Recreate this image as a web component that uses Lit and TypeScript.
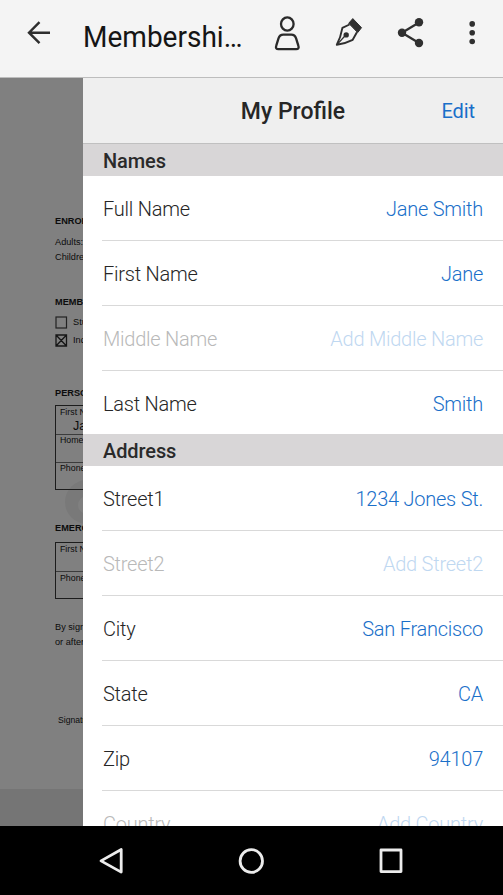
import { LitElement, html, css, svg } from "lit";
import { customElement, property } from "lit/decorators.js";

@customElement("form-page")
class FormPage extends LitElement {
  static styles = css`
    :host { display: block; position: relative; width: 83px; height: 100%; overflow: hidden; background: #808080; color: #0c0c0c; font-family: "Liberation Sans", Arial, sans-serif; font-size: 9.2px; white-space: nowrap; }
    .sheet { box-sizing: border-box; position: relative; height: 711px; padding: 136px 0 0 55px; display: flex; flex-direction: column; }
    .desk { height: 37px; background: #757575; }
    .line { line-height: 15px; height: 15px; flex: none; }
    .tight { height: 14px; line-height: 14px; }
    .head { font-weight: bold; line-height: 14px; height: 14px; flex: none; }
    .check { display: flex; align-items: center; gap: 5px; height: 18px; flex: none; }
    .check svg { width: 13px; height: 13px; flex: none; }
    .group { display: flex; flex-direction: column; margin-top: 4px; }
    .table { display: flex; flex-direction: column; border: 1px solid #1c1c1c; width: 120px; box-sizing: border-box; flex: none; }
    .cell { box-sizing: border-box; padding: 0 0 0 4px; line-height: 10px; font-size: 8.8px; border-top: 1px solid #3c3c3c; }
    .cell:first-child { border-top: 0; padding-top: 1px; }
    .low .cell { padding-top: 1px; }
    .c28 { height: 28px; }
    .c27 { height: 27px; }
    .entry { font-size: 12.5px; line-height: 14px; padding: 2px 0 0 13px; }
    .a { margin-top: 7px; }
    .b { margin-top: 30px; }
    .c { margin-top: 37px; }
    .d { margin-top: 5px; }
    .e { margin-top: 31px; }
    .f { margin-top: 7px; }
    .g { margin-top: 21px; }
    .h { margin: 64px 0 0 3px; font-size: 8.6px; }
    .mark { position: absolute; left: 65px; top: 402px; width: 44px; height: 44px; border-radius: 50%; background: #797979; }
    .mark::after { content: ""; position: absolute; left: 13px; top: 16px; width: 18px; height: 18px; border-radius: 50%; background: #808080; }
  `;
  render() {
    return html`
      <div class="mark"></div>
      <div class="sheet">
        <div class="head">ENROLLMENT</div>
        <div class="line a">Adults:</div>
        <div class="line">Children:</div>
        <div class="head b">MEMBERSHIP</div>
        <div class="group">
          <div class="check"><svg viewBox="0 0 13 13"><rect x="1" y="1" width="10.5" height="11" fill="none" stroke="#222" stroke-width="1.2" /></svg>Student</div>
          <div class="check"><svg viewBox="0 0 13 13"><path d="M1 1h10.5v11H1zM1 1l10.5 11M11.5 1L1 12" fill="none" stroke="#161616" stroke-width="1.3" /></svg>Individual</div>
        </div>
        <div class="head c">PERSONAL</div>
        <div class="table d">
          <div class="cell c28">First Name<div class="entry">Jane</div></div>
          <div class="cell c28">Home Address</div>
          <div class="cell c27">Phone</div>
        </div>
        <div class="head e">EMERGENCY</div>
        <div class="table low f">
          <div class="cell c28">First Name</div>
          <div class="cell c27">Phone</div>
        </div>
        <div class="line g">By signing</div>
        <div class="line tight">or after</div>
        <div class="line h">Signature</div>
      </div>
      <div class="desk"></div>
    `;
  }
}

@customElement("profile-row")
class ProfileRow extends LitElement {
  @property() label = "";
  @property() value = "";
  @property({ type: Boolean, reflect: true }) empty = false;
  static styles = css`
    :host { display: flex; justify-content: space-between; align-items: center; box-sizing: border-box; flex: none; height: 65px; margin-left: 19px; padding: 2px 20px 0 1px; border-bottom: 1px solid #d9d9d9; font-size: 20px; font-weight: 300; letter-spacing: -0.24px; color: #262626; white-space: nowrap; }
    .value { color: #1a6fc9; }
    :host([empty]) { color: #b9b9b9; }
    :host([empty]) .value { color: #bfd8f1; }
  `;
  render() {
    return html`<span>${this.label}</span><span class="value">${this.value}</span>`;
  }
}

type Field = [label: string, value: string, empty?: boolean];
const SECTIONS: { title: string; fields: Field[] }[] = [
  {
    title: "Names",
    fields: [
      ["Full Name", "Jane Smith"],
      ["First Name", "Jane"],
      ["Middle Name", "Add Middle Name", true],
      ["Last Name", "Smith"],
    ],
  },
  {
    title: "Address",
    fields: [
      ["Street1", "1234 Jones St."],
      ["Street2", "Add Street2", true],
      ["City", "San Francisco"],
      ["State", "CA"],
      ["Zip", "94107"],
      ["Country", "Add Country", true],
    ],
  },
];

const glyphs = {
  back: svg`<path d="M50 32.7H29M39.5 22.2L29 32.7l10.5 10.5" fill="none" stroke="#2e2e2e" stroke-width="2.4" />`,
  person: svg`<g fill="none" stroke="#2a2a2a" stroke-width="2.3"><ellipse cx="287.3" cy="24" rx="6.3" ry="6.6" /><path d="M283.3 34.6h8c2.6 0 4 1.3 4.8 3.7l2.3 7.6c.7 2.1-.2 3.3-2.2 3.3h-17.8c-2 0-2.9-1.2-2.2-3.3l2.3-7.6c.8-2.4 2.2-3.7 4.8-3.7z" /></g>`,
  pen: svg`<path d="M352.8 18.6l8.7 9.1-3.8 4.9-9-9.3z" fill="#2f2f2f" stroke="#2f2f2f" stroke-linejoin="round" /><path d="M349.5 24.5l-7.1 3.4c-1 5.6-2.8 11.6-5.6 16.9 5.8-.9 10.8-2.4 15.9-5l4.2-7.6" fill="none" stroke="#2f2f2f" stroke-width="1.9" stroke-linejoin="round" /><path d="M337 44.6l9-9.8" stroke="#2f2f2f" stroke-width="1.3" /><circle cx="346.2" cy="34.9" r="2.7" fill="#2f2f2f" />`,
  share: svg`<path d="M419 22.4L402 32.7l17 10.3" fill="none" stroke="#303030" stroke-width="2.3" /><g fill="#303030"><circle cx="419" cy="22.3" r="4.2" /><circle cx="402" cy="32.7" r="4.2" /><circle cx="419" cy="43" r="4.2" /></g>`,
  more: svg`<g fill="#303030"><circle cx="472.2" cy="23.9" r="2.8" /><circle cx="472.2" cy="32.7" r="2.8" /><circle cx="472.2" cy="41.5" r="2.8" /></g>`,
};

@customElement("app-root")
class AppRoot extends LitElement {
  static styles = css`
    :host { display: flex; flex-direction: column; width: 503px; height: 895px; overflow: hidden; background: #000; font-family: Roboto, sans-serif; }
    .top { display: flex; box-sizing: border-box; height: 78px; flex: none; background: #f4f4f4; border-bottom: 1px solid #bdbdbd; }
    .top svg { height: 77px; flex: none; }
    .back { width: 83px; }
    .title { width: 175px; line-height: 74px; font-size: 29px; color: #151515; white-space: nowrap; }
    .title span { display: inline-block; transform: scaleX(0.966); transform-origin: 0 50%; }
    .person { width: 64px; }
    .pen { width: 56px; }
    .share { width: 60px; }
    .more { width: 65px; }
    .main { display: flex; height: 748px; flex: none; overflow: hidden; }
    .panel { display: flex; flex-direction: column; flex: 1; min-width: 0; background: #fff; overflow: hidden; }
    .header { display: grid; grid-template-columns: 1fr auto 1fr; align-items: center; box-sizing: border-box; height: 66px; flex: none; background: #efefef; border-bottom: 1px solid #c0c0c0; }
    .name { grid-column: 2; padding-top: 1px; font-size: 23px; font-weight: 500; color: #262626; }
    .edit { justify-self: end; padding-right: 28px; font-size: 20px; letter-spacing: -0.1px; color: #1a6fc9; }
    .section { box-sizing: border-box; height: 32px; flex: none; padding-left: 20px; line-height: 34px; background: #d8d6d7; font-size: 20px; font-weight: 500; letter-spacing: -0.1px; color: #2a2a2a; }
    .last { height: 63px; border-bottom: 0; }
    .nav { display: flex; height: 69px; flex: none; background: #000; }
    .nav svg { width: 503px; height: 69px; }
  `;
  render() {
    return html`
      <div class="top">
        <svg class="back" viewBox="0 0 83 77">${glyphs.back}</svg>
        <div class="title"><span>Membershi…</span></div>
        <svg class="person" viewBox="258 0 64 77">${glyphs.person}</svg>
        <svg class="pen" viewBox="322 0 56 77">${glyphs.pen}</svg>
        <svg class="share" viewBox="378 0 60 77">${glyphs.share}</svg>
        <svg class="more" viewBox="438 0 65 77">${glyphs.more}</svg>
      </div>
      <div class="main">
        <form-page></form-page>
        <div class="panel">
          <div class="header"><span class="name">My Profile</span><span class="edit">Edit</span></div>
          ${SECTIONS.map(
            (s, n) => html`<div class="section">${s.title}</div>
              ${s.fields.map(([label, value, empty], i) => html`<profile-row class=${n === 0 && i === s.fields.length - 1 ? "last" : ""} .label=${label} .value=${value} .empty=${!!empty}></profile-row>`)}`
          )}
        </div>
      </div>
      <div class="nav">
        <svg viewBox="0 0 503 69">
          <g fill="none" stroke="#ececec" stroke-width="2.8" stroke-linejoin="round">
            <path d="M121.2 23.5v22.6L101 34.9z" />
            <ellipse cx="251.3" cy="35" rx="11.2" ry="11.4" />
            <rect x="381" y="24" width="20" height="21.6" />
          </g>
        </svg>
      </div>
    `;
  }
}
